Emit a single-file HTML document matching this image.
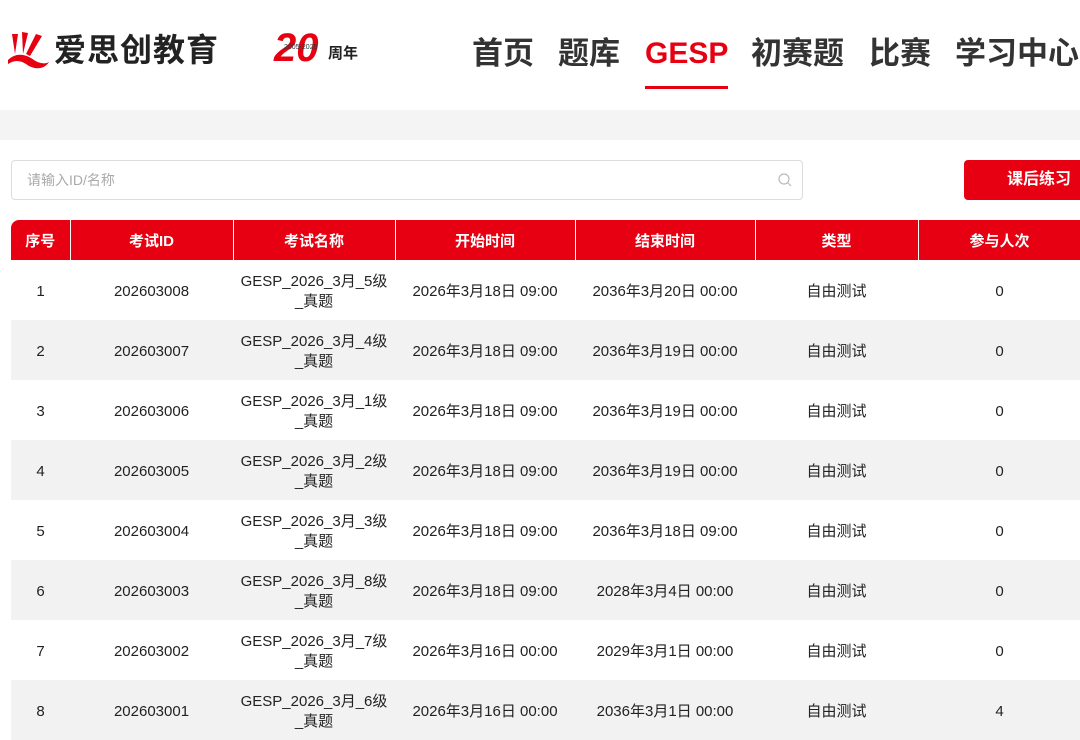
<!DOCTYPE html>
<html><head><meta charset="utf-8"><style>
*{margin:0;padding:0;box-sizing:border-box}
body{width:1080px;height:734px;overflow:hidden;background:#fff;font-family:"Liberation Sans","Noto Sans CJK SC",sans-serif;position:relative;color:#222}
.a{position:absolute}
.nav{top:32px;font-size:31px;font-weight:bold;color:#333;line-height:44px;white-space:nowrap}
table{position:absolute;left:11px;top:220px;border-collapse:collapse;table-layout:fixed;width:1100px}
th{background:#e60012;color:#fff;font-size:15px;font-weight:bold;height:40px;border-left:1px solid #fff;text-align:center}
th:first-child{border-left:none;border-top-left-radius:8px}
td{height:60px;text-align:center;font-size:15px;line-height:20px;color:#222;padding-top:4px}
tr.g td{background:#f2f2f2}
</style></head><body>
<div class="a" style="left:6px;top:30px;width:44px;height:40px">
<svg width="44" height="40" viewBox="0 0 44 40"><path d="M6 4 L12 4 L9 24 Z M16 2 L22 3 L17 24 Z M30 4 L36 6 L24 26 L20 24 Z M2 30 C10 22 20 24 28 30 C34 34 40 34 43 32 C38 40 28 40 20 34 C14 30 8 30 2 34 Z" fill="#e60012"/></svg></div>
<div class="a" style="left:54px;top:30px;font-size:32px;font-weight:bold;color:#222;letter-spacing:1px;line-height:40px">爱思创教育</div>
<div class="a" style="left:274px;top:26px;font-size:40px;font-weight:bold;font-style:italic;color:#e60012;line-height:44px">20</div>
<div class="a" style="left:284px;top:44px;font-size:7px;color:#333">2005-2025</div>
<div class="a" style="left:328px;top:42px;font-size:15px;font-weight:bold;color:#222">周年</div>
<div class="a nav" style="left:472px">首页</div>
<div class="a nav" style="left:558px">题库</div>
<div class="a nav" style="left:645px;color:#e60012;font-size:30px">GESP</div>
<div class="a" style="left:645px;top:86px;width:83px;height:3px;background:#e60012"></div>
<div class="a nav" style="left:751px">初赛题</div>
<div class="a nav" style="left:869px">比赛</div>
<div class="a nav" style="left:955px">学习中心</div>
<div class="a" style="left:0;top:110px;width:1080px;height:30px;background:#f4f4f4"></div>
<div class="a" style="left:11px;top:160px;width:792px;height:40px;border:1px solid #dcdcdc;border-radius:4px;font-size:14px;color:#aaa;line-height:38px;padding-left:15px">请输入ID/名称
<svg style="position:absolute;right:10px;top:12px" width="14" height="14" viewBox="0 0 14 14"><circle cx="6" cy="6" r="5" fill="none" stroke="#bbb" stroke-width="1.2"/><path d="M10 10 L13 13" stroke="#bbb" stroke-width="1.2"/></svg></div>
<div class="a" style="left:964px;top:160px;width:130px;height:40px;background:#e60012;border-radius:4px;color:#fff;font-size:16px;font-weight:bold;line-height:40px;padding-left:43px">课后练习</div>
<table>
<colgroup><col style="width:59px"><col style="width:163px"><col style="width:162px"><col style="width:180px"><col style="width:180px"><col style="width:163px"><col style="width:163px"><col></colgroup>
<tr><th>序号</th><th>考试ID</th><th>考试名称</th><th>开始时间</th><th>结束时间</th><th>类型</th><th>参与人次</th><th></th></tr>
<tr><td>1</td><td>202603008</td><td>GESP_2026_3月_5级<br>_真题</td><td>2026年3月18日 09:00</td><td>2036年3月20日 00:00</td><td>自由测试</td><td>0</td><td></td></tr>
<tr class="g"><td>2</td><td>202603007</td><td>GESP_2026_3月_4级<br>_真题</td><td>2026年3月18日 09:00</td><td>2036年3月19日 00:00</td><td>自由测试</td><td>0</td><td></td></tr>
<tr><td>3</td><td>202603006</td><td>GESP_2026_3月_1级<br>_真题</td><td>2026年3月18日 09:00</td><td>2036年3月19日 00:00</td><td>自由测试</td><td>0</td><td></td></tr>
<tr class="g"><td>4</td><td>202603005</td><td>GESP_2026_3月_2级<br>_真题</td><td>2026年3月18日 09:00</td><td>2036年3月19日 00:00</td><td>自由测试</td><td>0</td><td></td></tr>
<tr><td>5</td><td>202603004</td><td>GESP_2026_3月_3级<br>_真题</td><td>2026年3月18日 09:00</td><td>2036年3月18日 09:00</td><td>自由测试</td><td>0</td><td></td></tr>
<tr class="g"><td>6</td><td>202603003</td><td>GESP_2026_3月_8级<br>_真题</td><td>2026年3月18日 09:00</td><td>2028年3月4日 00:00</td><td>自由测试</td><td>0</td><td></td></tr>
<tr><td>7</td><td>202603002</td><td>GESP_2026_3月_7级<br>_真题</td><td>2026年3月16日 00:00</td><td>2029年3月1日 00:00</td><td>自由测试</td><td>0</td><td></td></tr>
<tr class="g"><td>8</td><td>202603001</td><td>GESP_2026_3月_6级<br>_真题</td><td>2026年3月16日 00:00</td><td>2036年3月1日 00:00</td><td>自由测试</td><td>4</td><td></td></tr>
</table>
</body></html>
